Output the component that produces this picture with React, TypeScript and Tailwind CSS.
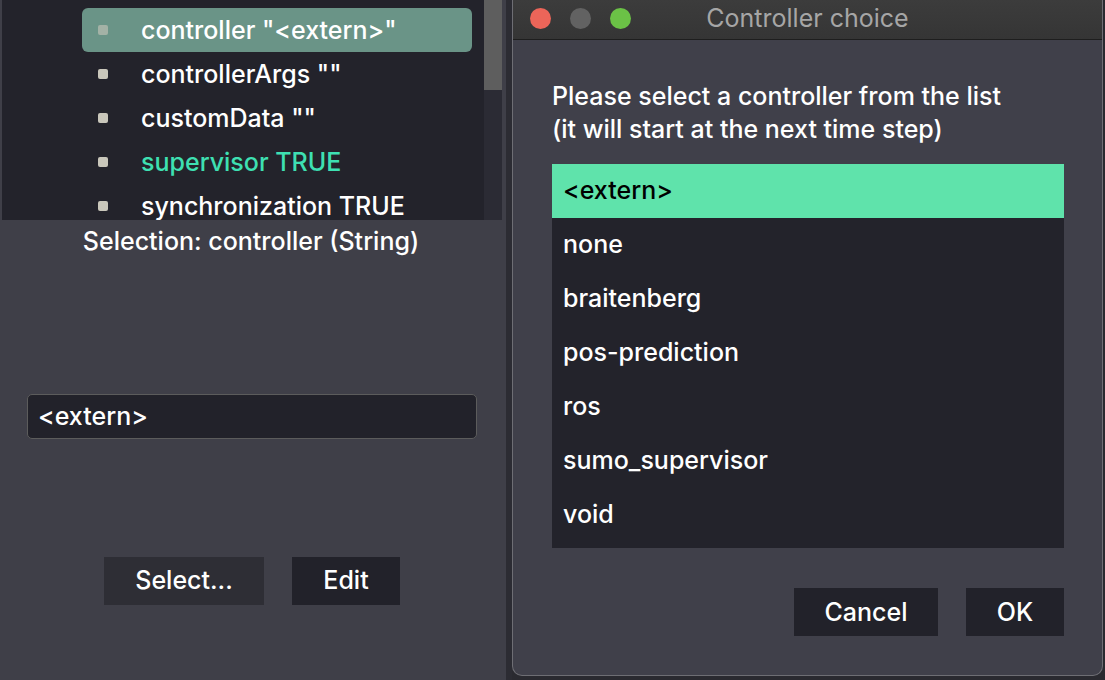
import React from "react";

const font = { fontFamily: "Inter, 'Noto Sans', sans-serif" };

function Bullet() {
  return <div className="w-[10px] h-[10px] rounded-[2px] bg-[#c9c7bb]" />;
}

function TreeRow({ label, selected, green }: { label: string; selected?: boolean; green?: boolean }) {
  return (
    <div
      className={
        "h-[44px] flex items-center pl-[16px] rounded-[6px] " +
        (selected ? "bg-[#6a9487]" : "")
      }
    >
      <div className={selected ? "opacity-60" : ""}>
        <Bullet />
      </div>
      <span
        className={
          "ml-[33px] text-[25px] leading-none " +
          (green ? "text-[#3ee0b2]" : "text-white")
        }
      >
        {label}
      </span>
    </div>
  );
}

const items = ["<extern>", "none", "braitenberg", "pos-prediction", "ros", "sumo_supervisor", "void"];

export default function App() {
  return (
    <div className="w-[1105px] h-[680px] overflow-hidden flex bg-[#2a2a30] font-medium" style={font}>
      {/* Left panel */}
      <div className="w-[506px] h-full bg-[#3f3f48] flex flex-col shrink-0">
        <div className="h-[220px] flex ml-[2px]">
          <div className="w-[482px] bg-[#23232b] pt-[8px] pl-[80px] pr-[12px] overflow-hidden">
            <TreeRow label={'controller "<extern>"'} selected />
            <TreeRow label={'controllerArgs ""'} />
            <TreeRow label={'customData ""'} />
            <TreeRow label="supervisor TRUE" green />
            <TreeRow label="synchronization TRUE" />
          </div>
          <div className="w-[18px] bg-[#2b2b34] flex flex-col">
            <div className="h-[90px] bg-[#5e5e5e]" />
          </div>
        </div>
        <div className="w-[502px] text-center text-white text-[25px] leading-none mt-[9px]">
          Selection: controller (String)
        </div>
        <div className="mt-[140px] ml-[27px] w-[450px] h-[45px] rounded-[5px] border border-[#5c5c5c] bg-[#22222a] flex items-center px-[10px] text-white text-[25px]">
          {"<extern>"}
        </div>
        <div className="flex mt-[118px] ml-[104px] gap-[28px]">
          <div className="w-[160px] h-[48px] bg-[#2e2e35] text-white text-[25px] flex items-center justify-center">
            Select...
          </div>
          <div className="w-[108px] h-[48px] bg-[#22222a] text-white text-[25px] flex items-center justify-center">
            Edit
          </div>
        </div>
      </div>
      {/* Gap strip */}
      <div className="w-[6px] h-full bg-[#2c2c33] shrink-0" />
      {/* Dialog */}
      <div className="w-[591px] h-[676px] shrink-0 rounded-b-[10px] border border-[#6e6e74] border-t-0 bg-[#40404a] flex flex-col overflow-hidden">
        <div className="h-[40px] bg-gradient-to-b from-[#3c3c3c] to-[#353535] border-b border-[#1e1e1e] relative flex items-center justify-center">
          <div className="absolute left-[17px] top-[8px] flex gap-[19px]">
            <div className="w-[21px] h-[21px] rounded-full bg-[#ec6559]" />
            <div className="w-[21px] h-[21px] rounded-full bg-[#626262]" />
            <div className="w-[21px] h-[21px] rounded-full bg-[#6bc246]" />
          </div>
          <span className="text-[25px] text-[#a6a6a6] leading-none -mt-[2px] font-normal">Controller choice</span>
        </div>
        <div className="pl-[39px] pr-[38px] flex flex-col">
          <div className="mt-[40px] text-white text-[25px] leading-[33px]">
            Please select a controller from the list
            <br />
            (it will start at the next time step)
          </div>
          <div className="mt-[18px] w-[512px] h-[384px] bg-[#23232b] flex flex-col">
            {items.map((it, i) => (
              <div
                key={it}
                className={
                  "h-[54px] flex items-center pl-[11px] text-[25px] " +
                  (i === 0 ? "bg-[#5fe3ab] text-black" : "text-white")
                }
              >
                {it}
              </div>
            ))}
          </div>
          <div className="flex justify-end gap-[28px] mt-[40px] w-[512px]">
            <div className="w-[144px] h-[48px] bg-[#22222a] text-white text-[25px] flex items-center justify-center pt-[2px]">
              Cancel
            </div>
            <div className="w-[98px] h-[48px] bg-[#22222a] text-white text-[25px] flex items-center justify-center pt-[2px]">
              OK
            </div>
          </div>
        </div>
      </div>
    </div>
  );
}
